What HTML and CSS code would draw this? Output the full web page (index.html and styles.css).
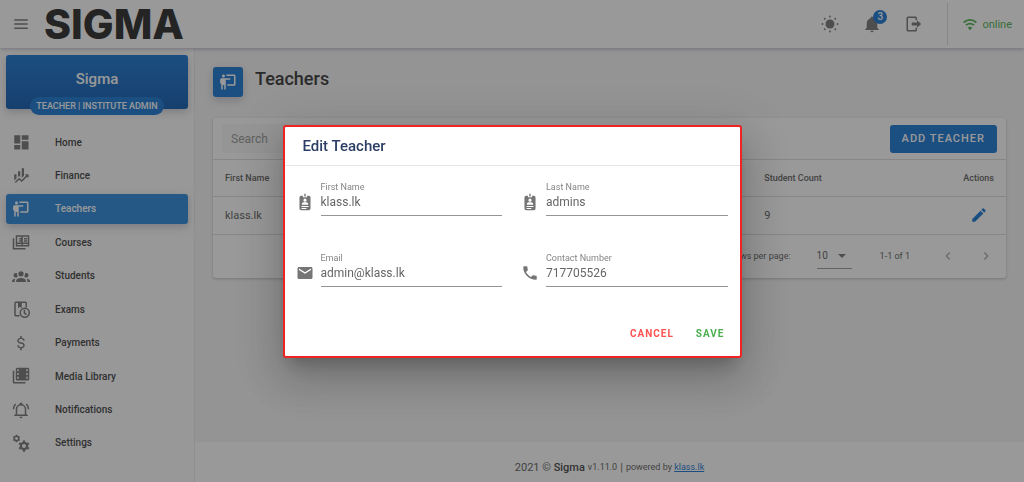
FILE: index.html
```html
<!DOCTYPE html>
<html lang="en">
<head>
<meta charset="utf-8">
<meta name="viewport" content="width=device-width, initial-scale=1">
<title>Teachers</title>
<link rel="stylesheet" href="styles.css">
</head>
<body>
<svg class="sprite" aria-hidden="true">
  <symbol id="i-board" viewBox="0 0 24 24"><path d="M20 17C21.1 17 22 16.1 22 15V4C22 2.9 21.1 2 20 2H9.46C9.81 2.61 10 3.3 10 4H20V15H11V17M15 7V9H9V22H7V16H5V22H3V14H1.5V9C1.5 7.9 2.4 7 3.5 7H15M8 4C8 5.1 7.11 6 6 6S4 5.1 4 4 4.9 2 6 2 8 2.9 8 4Z"/></symbol>
  <symbol id="i-badge" viewBox="-1 -1 26 26"><path fill-rule="evenodd" d="M11 0H13V3H17.500A2.500 2.500 0 0 1 20 5.500V21.500A2.500 2.500 0 0 1 17.500 24H6.500A2.500 2.500 0 0 1 4 21.500V5.500A2.500 2.500 0 0 1 6.500 3H11ZM9 3V5H15V3H13V4H11V3ZM12 7A2.300 2.300 0 1 0 12 11.600A2.300 2.300 0 1 0 12 7M7.500 16H16.500V14.500C16.500 13 14 12.400 12 12.400S7.500 13 7.500 14.500ZM7 17.800V19.200H17V17.800ZM7 20.600V22H14V20.600Z"/></symbol>
</svg>

<div class="app">
  <header class="topbar">
    <button class="icon-btn" type="button" aria-label="Menu"><svg class="icon icon-md" viewBox="0 0 24 24"><path d="M3 5.500H21V7.500H3ZM3 11H21V13H3ZM3 16.500H21V18.500H3Z"/></svg></button>
    <a class="logo" href="#">SIGMA</a>
    <div class="tools">
      <button class="icon-btn" type="button" aria-label="Theme"><svg class="icon icon-md" viewBox="0 0 24 24"><circle cx="12" cy="12" r="6"/><g><circle cx="12" cy="2" r="1.200"/><circle cx="12" cy="22" r="1.200"/><circle cx="2" cy="12" r="1.200"/><circle cx="22" cy="12" r="1.200"/><circle cx="5" cy="5" r="1.200"/><circle cx="19" cy="5" r="1.200"/><circle cx="5" cy="19" r="1.200"/><circle cx="19" cy="19" r="1.200"/></g></svg></button>
      <button class="icon-btn bell" type="button" aria-label="Notifications"><svg class="icon icon-md" viewBox="0 0 24 24"><path d="M21,19V20H3V19L5,17V11C5,7.9 7.03,5.17 10,4.29C10,4.19 10,4.1 10,4A2,2 0 0,1 12,2A2,2 0 0,1 14,4C14,4.1 14,4.19 14,4.290C16.970,5.170 19,7.900 19,11V17L21,19M14,21A2,2 0 0,1 12,23A2,2 0 0,1 10,21"/></svg><span class="count">3</span></button>
      <button class="icon-btn" type="button" aria-label="Log out"><svg class="icon icon-md" viewBox="0 0 24 24"><path d="M14 7V4H4V20H14V17H16V20A2 2 0 0 1 14 22H4A2 2 0 0 1 2 20V4A2 2 0 0 1 4 2H14A2 2 0 0 1 16 4V7ZM9 10H16V7L21.500 12L16 17V14H9Z"/></svg></button>
    </div>
    <div class="status">
      <svg class="icon icon-sm" viewBox="0 0 24 24"><path class="arc" d="M1 9.500Q12 0.500 23 9.500M5 14Q12 8.500 19 14"/><path d="M8 18Q12 15 16 18L12 22.500Z"/></svg>
      <span>online</span>
    </div>
  </header>

  <aside class="drawer">
    <div class="profile">
      <strong class="profile-name">Sigma</strong>
      <span class="role">TEACHER | INSTITUTE ADMIN</span>
    </div>
    <nav class="nav">
      <a class="nav-item" href="#"><svg class="icon icon-md" viewBox="0 0 24 24"><path d="M13,3V9H22V3M13,22H22V11H13M3,22H11V16H3M3,14H11V3H3V14Z"/></svg>Home</a>
      <a class="nav-item" href="#"><svg class="icon icon-md" viewBox="0 0 24 24"><path d="M6,16.500L3,19.440V11H6M11,14.660L9.430,13.320L8,14.640V7H11M16,13L13,16V3H16M18.810,12.810L17,11H22V16L20.210,14.210L13,21.360L9.530,18.340L5.750,22H3L9.470,15.660L13,18.640"/></svg>Finance</a>
      <a class="nav-item active" href="#" aria-current="page"><svg class="icon icon-md"><use href="#i-board"/></svg>Teachers</a>
      <a class="nav-item" href="#"><svg class="icon icon-md" viewBox="0 0 24 24"><path class="line" d="M6 4H22V17H6ZM2 7V21H18M9.500 7.500H13V10.500H9.500M13.500 4V17M16 7.500H20M16 10.500H20M6 13.500H22"/></svg>Courses</a>
      <a class="nav-item" href="#"><svg class="icon icon-md" viewBox="0 0 24 24"><path d="M12,5.500A3.500,3.500 0 0,1 15.500,9A3.500,3.500 0 0,1 12,12.500A3.500,3.500 0 0,1 8.500,9A3.500,3.500 0 0,1 12,5.500M5,8C5.560,8 6.080,8.150 6.530,8.420C6.380,9.850 6.800,11.270 7.660,12.380C7.160,13.340 6.160,14 5,14A3,3 0 0,1 2,11A3,3 0 0,1 5,8M19,8A3,3 0 0,1 22,11A3,3 0 0,1 19,14C17.840,14 16.840,13.340 16.340,12.380C17.200,11.270 17.620,9.850 17.470,8.420C17.920,8.150 18.440,8 19,8M5.500,18.250C5.500,16.180 8.410,14.500 12,14.500C15.590,14.500 18.500,16.180 18.500,18.250V20H5.500V18.250M0,20V18.500C0,17.110 1.890,15.940 4.450,15.600C3.860,16.280 3.500,17.220 3.500,18.250V20H0M24,20H20.500V18.250C20.500,17.220 20.140,16.280 19.550,15.600C22.110,15.940 24,17.110 24,18.500V20Z"/></svg>Students</a>
      <a class="nav-item" href="#"><svg class="icon icon-md" viewBox="0 0 24 24"><path d="M5 2H18A2 2 0 0 1 20 4V10H18V4H13V11L10.500 9L8 11V4H5V20H10V22H5A2 2 0 0 1 3 20V4A2 2 0 0 1 5 2Z"/><circle class="line" cx="17" cy="17" r="6"/><path class="line" d="M16.500 13V17.500L19.500 19.500"/></svg>Exams</a>
      <a class="nav-item" href="#"><svg class="icon icon-md" viewBox="0 0 24 24"><path d="M7,15H9C9,16.500 10.300,17.400 12,17.400C13.700,17.400 15,16.500 15,15C15,13.900 13.960,13.500 11.760,12.970C9.640,12.440 7,11.780 7,9C7,7 8.700,5.500 11,5.080V2.500H13V5.080C15.300,5.500 17,7 17,9H15C15,7.700 13.700,6.800 12,6.800C10.300,6.800 9,7.700 9,9C9,10.100 10.040,10.500 12.240,11.030C14.360,11.560 17,12.220 17,15C17,17.200 15.400,18.600 13,19V21.500H11V19C8.600,18.600 7,17.200 7,15Z"/></svg>Payments</a>
      <a class="nav-item" href="#"><svg class="icon icon-md" viewBox="0 0 24 24"><path fill-rule="evenodd" d="M7 1H21A2 2 0 0 1 23 3V16A2 2 0 0 1 21 18H7A2 2 0 0 1 5 16V3A2 2 0 0 1 7 1ZM7 3V5.500H9V3ZM7 8V10.500H9V8ZM7 13V15.500H9V13ZM19 3V5.500H21V3ZM19 8V10.500H21V8ZM19 13V15.500H21V13ZM1 5H3V20H18V22H3A2 2 0 0 1 1 20Z"/></svg>Media Library</a>
      <a class="nav-item" href="#"><svg class="icon icon-md" viewBox="0 0 24 24"><path d="M10,21H14A2,2 0 0,1 12,23A2,2 0 0,1 10,21M21,19V20H3V19L5,17V11C5,7.900 7.030,5.170 10,4.290C10,4.190 10,4.100 10,4A2,2 0 0,1 12,2A2,2 0 0,1 14,4C14,4.100 14,4.190 14,4.290C16.970,5.170 19,7.900 19,11V17L21,19M17,11A5,5 0 0,0 12,6A5,5 0 0,0 7,11V18H17V11M19.750,3.190L18.330,4.610C20.040,6.300 21,8.600 21,11H23C23,8.070 21.840,5.250 19.750,3.190M1,11H3C3,8.600 3.960,6.300 5.670,4.610L4.250,3.190C2.160,5.250 1,8.070 1,11Z"/></svg>Notifications</a>
      <a class="nav-item" href="#"><svg class="icon icon-md" viewBox="0 0 24 24"><circle class="ring" cx="6" cy="6" r="2.900"/><path class="line" d="M6 1V3M6 9V11M1.700 3.500L3.400 4.500M8.600 7.500L10.300 8.500M1.700 8.500L3.400 7.500M8.600 4.500L10.300 3.500"/><circle class="ring-lg" cx="16" cy="16" r="4.200"/><path class="tooth" d="M16 8.500V11M16 21V23.500M9.500 12.250L11.700 13.500M20.300 18.500L22.500 19.750M9.500 19.750L11.700 18.500M20.300 13.500L22.500 12.250"/></svg>Settings</a>
    </nav>
  </aside>

  <main class="page">
    <div class="page-head">
      <span class="page-icon"><svg class="icon icon-md"><use href="#i-board"/></svg></span>
      <h1 class="page-title">Teachers</h1>
    </div>
    <section class="card">
      <div class="card-bar">
        <input class="search" type="search" placeholder="Search" aria-label="Search">
        <button class="add" type="button">ADD TEACHER</button>
      </div>
      <table class="grid">
        <thead><tr><th class="col-name">First Name</th><th>Student Count</th><th class="col-end">Actions</th></tr></thead>
        <tbody><tr><td>klass.lk</td><td>9</td><td class="col-end"><button class="icon-btn edit" type="button" aria-label="Edit"><svg class="icon icon-md" viewBox="0 0 24 24"><path d="M20.710,7.040C21.100,6.650 21.100,6 20.710,5.630L18.370,3.290C18,2.900 17.350,2.900 16.960,3.290L15.120,5.120L18.870,8.870M3,17.250V21H6.750L17.810,9.930L14.060,6.180L3,17.250Z"/></svg></button></td></tr></tbody>
      </table>
      <div class="pager">
        <label for="rows">Rows per page:</label>
        <span class="rows"><select id="rows"><option>10</option></select><svg class="caret" viewBox="0 0 8 4"><path d="M0 0H8L4 4Z"/></svg></span>
        <span class="range">1-1 of 1</span>
        <button class="icon-btn step" type="button" aria-label="Previous page"><svg class="icon" viewBox="0 0 24 24"><path d="M15.410,16.580L10.830,12L15.410,7.410L14,6L8,12L14,18L15.410,16.580Z"/></svg></button>
        <button class="icon-btn step" type="button" aria-label="Next page"><svg class="icon" viewBox="0 0 24 24"><path d="M8.590,16.580L13.170,12L8.590,7.410L10,6L16,12L10,18L8.590,16.580Z"/></svg></button>
      </div>
    </section>
  </main>

  <footer class="foot">
    <span>2021 © <strong>Sigma</strong></span>
    <small>v1.11.0</small>
    <span>|</span>
    <small>powered by <a href="#">klass.lk</a></small>
  </footer>
</div>

<div class="overlay">
  <form class="dialog" role="dialog" aria-modal="true" aria-labelledby="dialog-title">
    <h2 class="dialog-title" id="dialog-title">Edit Teacher</h2>
    <div class="fields">
      <div class="field"><svg class="icon icon-md"><use href="#i-badge"/></svg><div class="control"><label for="first">First Name</label><input id="first" type="text" value="klass.lk"></div></div>
      <div class="field"><svg class="icon icon-md"><use href="#i-badge"/></svg><div class="control"><label for="last">Last Name</label><input id="last" type="text" value="admins"></div></div>
      <div class="field"><svg class="icon icon-md" viewBox="0 0 24 24"><path d="M20,8L12,13L4,8V6L12,11L20,6M20,4H4C2.890,4 2,4.890 2,6V18A2,2 0 0,0 4,20H20A2,2 0 0,0 22,18V6C22,4.890 21.100,4 20,4Z"/></svg><div class="control"><label for="email">Email</label><input id="email" type="text" value="admin@klass.lk"></div></div>
      <div class="field"><svg class="icon icon-md" viewBox="0 0 24 24"><path d="M6.620,10.790C8.060,13.620 10.380,15.940 13.210,17.380L15.410,15.180C15.690,14.900 16.080,14.820 16.430,14.930C17.550,15.300 18.750,15.500 20,15.500A1,1 0 0,1 21,16.500V20A1,1 0 0,1 20,21A17,17 0 0,1 3,4A1,1 0 0,1 4,3H7.500A1,1 0 0,1 8.500,4C8.500,5.250 8.700,6.450 9.070,7.570C9.180,7.920 9.100,8.310 8.820,8.590L6.620,10.790Z"/></svg><div class="control"><label for="phone">Contact Number</label><input id="phone" type="tel" value="717705526"></div></div>
    </div>
    <div class="actions">
      <button class="text-btn cancel" type="button">CANCEL</button>
      <button class="text-btn save" type="submit">SAVE</button>
    </div>
  </form>
</div>
</body>
</html>
```
FILE: styles.css
```css
* { box-sizing: border-box; }

body {
  margin: 0;
  font-family: Roboto, "Liberation Sans", sans-serif;
  font-size: 12px;
  color: #5e5e5e;
}

button, input, select { font: inherit; color: inherit; }
button { border: 0; background: none; padding: 0; cursor: pointer; }
a { color: inherit; text-decoration: none; }

.sprite { position: absolute; width: 0; height: 0; }

.icon { width: 16px; height: 16px; flex: none; fill: currentColor; display: block; }
.icon-md { width: 18px; height: 18px; }
.icon-sm { width: 14px; height: 14px; }
.line { fill: none; stroke: currentColor; stroke-width: 2; }
.ring { fill: none; stroke: currentColor; stroke-width: 2; }
.ring-lg, .tooth, .arc { fill: none; stroke: currentColor; stroke-width: 3; }
.icon-btn { display: inline-flex; align-items: center; justify-content: center; color: #757575; }

.app {
  min-height: 100vh;
  display: grid;
  grid-template: 48px 1fr 40px / 195px 1fr;
  grid-template-areas: "top top" "side main" "side foot";
  background: #f6f6f6;
}

/* Top bar */
.topbar {
  grid-area: top;
  z-index: 1;
  display: flex;
  align-items: center;
  padding: 0 12px;
  background: #fff;
  box-shadow: 0 1px 4px rgba(50, 50, 93, .35);
}
.logo {
  margin-left: 14px;
  font: 800 41px/46px Inter, sans-serif;
  color: #272727;
}
.tools { display: flex; gap: 24px; margin-left: auto; }
.bell { position: relative; }
.count {
  position: absolute;
  left: 10px;
  top: -5px;
  width: 14px;
  height: 14px;
  border-radius: 50%;
  background: #1976d2;
  color: #fff;
  font-size: 10px;
  font-weight: 500;
  line-height: 14px;
}
.status {
  display: flex;
  align-items: center;
  gap: 5px;
  height: 42px;
  margin-left: 24px;
  padding-left: 15px;
  border-left: 1px solid #dedede;
  color: #4caf50;
  font-size: 11px;
}

/* Drawer */
.drawer {
  grid-area: side;
  padding: 7px 6px 20px;
  background: #fdfdfd;
  border-right: 1px solid #ececec;
}
.profile {
  height: 54px;
  display: flex;
  flex-direction: column;
  align-items: center;
  padding-top: 14px;
  gap: 8px;
  border-radius: 3px;
  background: linear-gradient(#1976d2, #0d5aaf);
  box-shadow: 0 3px 8px rgba(50, 50, 93, .25);
  color: #fff;
}
.profile-name { font-size: 15px; line-height: 20px; font-weight: 500; }
.role {
  padding: 0 6px;
  border-radius: 9px;
  background: #1976d2;
  font-size: 9px;
  font-weight: 500;
  line-height: 18px;
  white-space: nowrap;
}
.nav {
  height: 331px;
  margin-top: 18px;
  display: flex;
  flex-direction: column;
  justify-content: space-between;
}
.nav-item {
  height: 30px;
  display: flex;
  align-items: center;
  gap: 25px;
  padding-left: 6px;
  border-radius: 3px;
  font-size: 10px;
  font-weight: 500;
  color: #3e3e3e;
}
.nav-item .icon { color: #757575; }
.nav-item.active, .nav-item.active .icon { color: #fff; }
.nav-item.active { background: #2b88dc; box-shadow: 0 3px 8px rgba(50, 50, 93, .25); }

/* Page */
.page { grid-area: main; padding: 19px 18px 20px; }
.page-head { display: flex; gap: 12px; }
.page-icon {
  width: 30px;
  height: 30px;
  display: grid;
  place-items: center;
  border-radius: 3px;
  background: #1976d2;
  color: #fff;
  box-shadow: 0 3px 8px rgba(50, 50, 93, .25);
}
.page-title { margin: 0; font-size: 18px; line-height: 24px; font-weight: 500; color: #333; }

.card {
  margin-top: 21px;
  border-radius: 3px;
  background: #fff;
  box-shadow: 0 1px 3px rgba(50, 50, 93, .3);
}
.card-bar { display: flex; justify-content: space-between; align-items: center; height: 41px; padding: 0 9px; }
.search {
  width: 300px;
  height: 29px;
  border: 0;
  border-radius: 3px;
  padding: 0 9px;
  background: #f7f7f7;
}
.search::placeholder { color: #999; }
.add {
  height: 28px;
  padding: 0 12px;
  border-radius: 3px;
  background: #1976d2;
  color: #fff;
  font-size: 11px;
  font-weight: 500;
  letter-spacing: 1px;
}
.grid { width: 100%; border-collapse: collapse; table-layout: fixed; }
.grid th, .grid td { height: 37px; padding: 0 12px; border-top: 1px solid #ddd; text-align: left; }
.grid th { font-size: 9px; font-weight: 500; }
.grid td { font-size: 11px; }
.grid .col-name { width: 68%; }
.grid .col-end { text-align: right; }
.grid .edit { color: #1976d2; padding-right: 6px; vertical-align: middle; }

.pager {
  display: flex;
  align-items: center;
  justify-content: flex-end;
  height: 44px;
  padding-right: 12px;
  border-top: 1px solid #ddd;
  font-size: 9px;
}
.rows { position: relative; margin-left: 26px; }
.rows select {
  appearance: none;
  display: block;
  width: 35px;
  height: 26px;
  padding: 0;
  border: 0;
  border-bottom: 1px solid #999;
  border-radius: 0;
  background: none;
  font-size: 10px;
}
.caret { position: absolute; right: 6px; top: 11px; width: 8px; height: 4px; fill: #757575; }
.range { margin: 0 30px 0 28px; }
.step { color: #aaa; }
.step + .step { margin-left: 22px; }

.foot {
  grid-area: foot;
  display: flex;
  align-items: center;
  justify-content: center;
  gap: 3px;
  padding-top: 10px;
  background: #fff;
  font-size: 11px;
}
.foot strong { font-weight: 500; color: #444; }
.foot small { font-size: 9px; }
.foot a { color: #1976d2; text-decoration: underline; }

/* Dialog */
.overlay {
  position: fixed;
  inset: 0;
  z-index: 5;
  display: flex;
  align-items: center;
  justify-content: center;
  background: rgba(33, 33, 33, .46);
}
.dialog {
  width: 459px;
  max-width: 90%;
  border: 2px solid #ee2424;
  border-radius: 3px;
  background: #fff;
  box-shadow: 0 11px 15px -7px rgba(0, 0, 0, .2), 0 24px 38px 3px rgba(0, 0, 0, .14), 0 9px 46px 8px rgba(0, 0, 0, .12);
}
.dialog-title {
  margin: 0;
  padding: 0 18px;
  border-bottom: 1px solid #e4e4e4;
  font-size: 15px;
  line-height: 38px;
  font-weight: 500;
  color: #2c3e66;
}
.fields {
  display: grid;
  grid-template-columns: 1fr 1fr;
  gap: 36px 19px;
  padding: 15px 12px 35px 11px;
}
.field { display: flex; gap: 7px; align-items: center; color: #666; }
.field .icon { margin-top: 8px; color: #757575; }
.control { flex: 1; min-width: 0; }
.control label { display: block; font-size: 9px; line-height: 12px; color: #858585; }
.control input {
  display: block;
  width: 100%;
  height: 23px;
  padding: 0 0 3px;
  border: 0;
  border-bottom: 1px solid #949494;
  background: none;
  outline: 0;
}
.actions { display: flex; justify-content: flex-end; gap: 22px; padding: 0 15px 10px; }
.text-btn { height: 24px; font-size: 10px; font-weight: 700; letter-spacing: 1px; }
.cancel { color: #ff5252; }
.save { color: #4caf50; }
```
